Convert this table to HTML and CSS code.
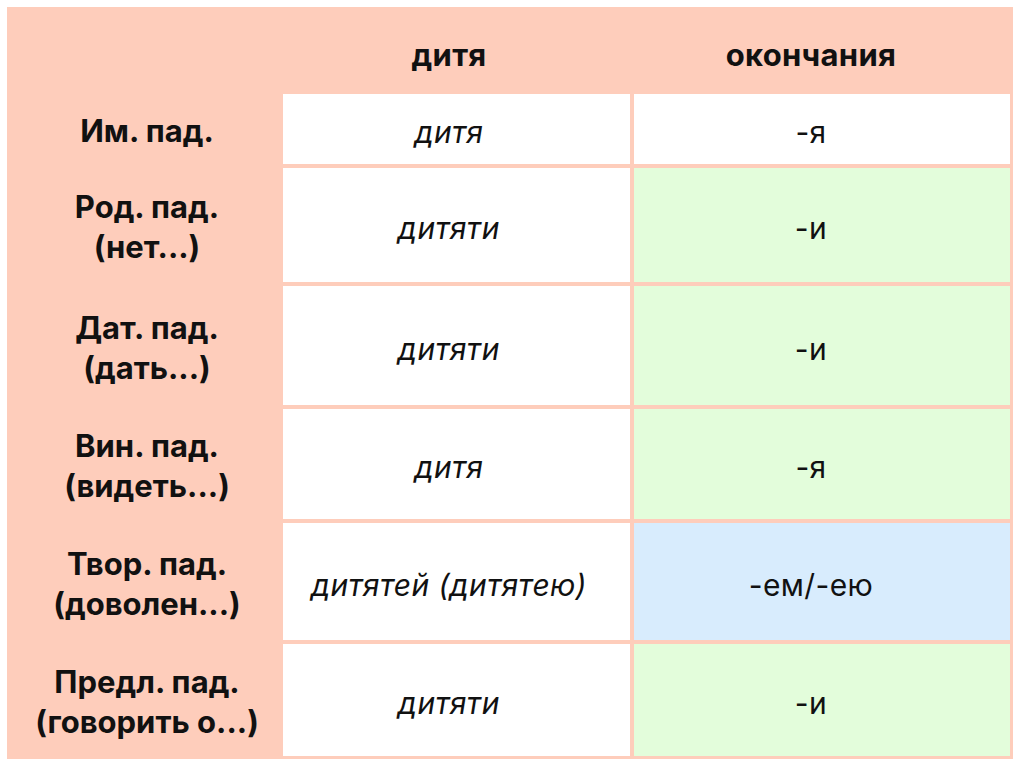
FILE: index.html
```html
<!DOCTYPE html>
<html lang="ru">
<head>
<meta charset="utf-8">
<title>дитя</title>
<link rel="stylesheet" href="styles.css">
</head>
<body>
<div class="table">
  <div class="head"></div>
  <div class="head col2">дитя</div>
  <div class="head col3">окончания</div>

  <div class="label">Им. пад.</div>
  <div class="word">дитя</div>
  <div class="end white">-я</div>

  <div class="label">Род. пад.<br>(нет...)</div>
  <div class="word">дитяти</div>
  <div class="end green">-и</div>

  <div class="label">Дат. пад.<br>(дать...)</div>
  <div class="word">дитяти</div>
  <div class="end green">-и</div>

  <div class="label">Вин. пад.<br>(видеть...)</div>
  <div class="word">дитя</div>
  <div class="end green">-я</div>

  <div class="label">Твор. пад.<br>(доволен...)</div>
  <div class="word">дитятей (дитятею)</div>
  <div class="end blue">-ем/-ею</div>

  <div class="label">Предл. пад.<br>(говорить о...)</div>
  <div class="word">дитяти</div>
  <div class="end green">-и</div>
</div>
</body>
</html>
```

FILE: styles.css
```css
html, body {
  margin: 0;
  padding: 0;
  background: #ffffff;
}

body {
  padding: 7px 0 0 7px;
  font-family: "Inter", "Noto Sans", sans-serif;
  color: #111111;
}

.table {
  width: 1006px;
  box-sizing: border-box;
  display: grid;
  grid-template-columns: 272px 347px 376px;
  grid-template-rows: 83px 70px 114px 119px 110px 117px 112px;
  column-gap: 4px;
  row-gap: 4px;
  padding: 0 3px 3px 0;
  background: #fecdbb;
}

.table > div {
  display: flex;
  align-items: center;
  justify-content: center;
  text-align: center;
}

.head {
  font-weight: 700;
  font-size: 31px;
  letter-spacing: 0.3px;
  align-items: flex-end !important;
  padding-bottom: 17px;
}

.label {
  font-weight: 700;
  font-size: 31px;
  line-height: 40px;
  padding-left: 8px;
  padding-top: 4px;
}

.word {
  background: #ffffff;
  font-style: italic;
  font-size: 30px;
  letter-spacing: 0.4px;
  padding-right: 15px;
  padding-top: 6px;
}

.head.col2 { padding-right: 15px; }
.head.col3 { padding-right: 22px; }

.end {
  font-size: 30px;
  letter-spacing: 0.4px;
  padding-right: 22px;
  padding-top: 6px;
}

.white { background: #ffffff; }
.green { background: #e3fddb; }
.blue { background: #d8ecfd; }
```
